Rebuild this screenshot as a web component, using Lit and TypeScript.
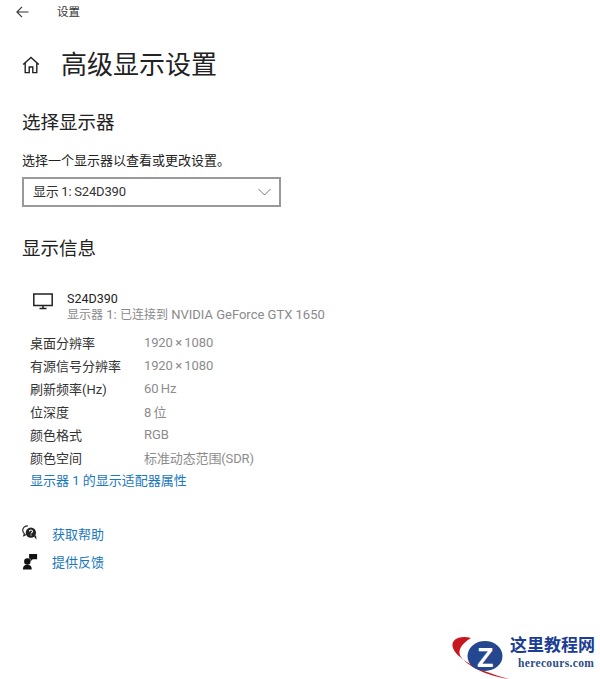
import { LitElement, html, css } from "lit";
import { customElement } from "lit/decorators.js";

const rows: [string, string][] = [
  ["桌面分辨率", "1920 × 1080"],
  ["有源信号分辨率", "1920 × 1080"],
  ["刷新频率(Hz)", "60 Hz"],
  ["位深度", "8 位"],
  ["颜色格式", "RGB"],
  ["颜色空间", "标准动态范围(SDR)"],
];

@customElement("app-root")
export class AppRoot extends LitElement {
  static styles = css`
    :host {
      display: block;
      width: 600px;
      height: 679px;
      overflow: hidden;
      background: #fff;
      color: #1c1c1c;
      font-family: Roboto, "Noto Sans CJK SC", sans-serif;
    }
    .page { display: flex; flex-direction: column; height: 679px; }
    .top { display: flex; align-items: center; height: 24px; padding-left: 16px; }
    .top svg { display: block; }
    .top span { margin-left: 28px; font-size: 11.5px; line-height: 24px; color: #333; }
    .title { display: flex; align-items: center; height: 40px; margin-top: 21px; padding-left: 22px; gap: 21px; }
    .title svg { display: block; }
    .title h1 { margin: 0; font-weight: 400; font-size: 26px; line-height: 40px; color: #222; }
    h2 { margin: 0; font-weight: 400; font-size: 18.5px; line-height: 28px; color: #222; padding-left: 22px; }
    .h-a { margin-top: 24px; }
    .h-b { margin-top: 28px; }
    .hint { margin: 14px 0 0 22px; font-size: 13px; line-height: 20px; color: #222; }
    .select {
      display: flex; align-items: center; justify-content: space-between;
      box-sizing: border-box; width: 259px; height: 30px; margin: 6px 0 0 22px;
      padding: 0 8px 0 9px; border: 2px solid #999; font-size: 13px; line-height: 20px; color: #333;
      letter-spacing: -0.15px; word-spacing: -0.4px;
    }
    .device { display: flex; margin: 28px 0 0 32px; gap: 13px; }
    .device svg { display: block; margin-top: 2px; }
    .name { font-size: 12.5px; line-height: 16px; color: #222; }
    .sub { font-size: 13px; line-height: 16px; color: #8a8a8a; }
    .sub .cjk { font-size: 12px; }
    .rows { display: grid; grid-template-columns: 114px auto; justify-content: start; margin: 8px 0 0 30px; grid-auto-rows: 23px; align-items: center; font-size: 13px; }
    .rows .k { color: #333; }
    .rows .v { color: #8c8c8c; letter-spacing: -0.12px; word-spacing: -0.7px; }
    .link { color: #1a78bd; font-size: 13px; }
    .adapter { margin-left: 30px; line-height: 23px; }
    .help { display: flex; align-items: center; gap: 14px; height: 28px; padding-left: 22px; }
    .help svg { display: block; }
    .help-first { margin-top: 27px; }
    .logo { display: flex; justify-content: flex-end; margin-top: auto; padding-right: 4px; }
    .logo svg { display: block; }
    .brand { font-family: "Noto Sans CJK SC", serif; font-weight: 700; font-size: 17px; fill: #1b3d94; }
    .domain { font-family: "Liberation Serif", serif; font-weight: 700; font-size: 11.5px; fill: #2b4b86; letter-spacing: 0.35px; }
    .z { font-family: "Liberation Sans", sans-serif; font-weight: 700; font-size: 27px; fill: #fff; }
  `;

  render() {
    return html`<div class="page">
      <div class="top">
        <svg width="13" height="12" viewBox="0 0 13 12" fill="none" stroke="#333" stroke-width="1.1">
          <path d="M12.5 6H1M6 .8 .9 6l5.1 5.2" />
        </svg>
        <span>设置</span>
      </div>
      <div class="title">
        <svg width="18" height="18" viewBox="0 0 18 18" fill="none" stroke="#222" stroke-width="1.4">
          <path d="M1.2 8.6 9 1.4l7.8 7.2M3.2 7v9.6h4V11h3.600v5.600h4V7" />
        </svg>
        <h1>高级显示设置</h1>
      </div>
      <h2 class="h-a">选择显示器</h2>
      <div class="hint">选择一个显示器以查看或更改设置。</div>
      <div class="select">
        <span>显示 1: S24D390</span>
        <svg width="13" height="8" viewBox="0 0 13 8" fill="none" stroke="#777" stroke-width="1">
          <path d="M.5 1 6.500 7l6-6" />
        </svg>
      </div>
      <h2 class="h-b">显示信息</h2>
      <div class="device">
        <svg width="22" height="17" viewBox="0 0 22 17" fill="none" stroke="#222" stroke-width="1.500">
          <path d="M1.800 1h18.400v11.500H1.800zM7.500 15.500h7M11 12.500v3" />
        </svg>
        <div>
          <div class="name">S24D390</div>
          <div class="sub"><span class="cjk">显示器</span> 1: <span class="cjk">已连接到</span> NVIDIA GeForce GTX 1650</div>
        </div>
      </div>
      <div class="rows">
        ${rows.map(([k, v]) => html`<div class="k">${k}</div><div class="v">${v}</div>`)}
      </div>
      <div class="link adapter">显示器 1 的显示适配器属性</div>
      <div class="help help-first">
        <svg width="16" height="16" viewBox="0 0 18 18">
          <path d="M6.500 1C3.200 1 .8 3.200.8 6c0 1.500.7 2.800 1.800 3.700L2 12l2.800-1.400" fill="none" stroke="#222" stroke-width="1.300" />
          <circle cx="10" cy="8.600" r="5.800" fill="#222" />
          <path d="M13.500 13l2.800 3.500-.5-5z" fill="#222" />
          <path d="M8.300 7.300c0-2.200 3.500-2.200 3.500-.1 0 1.300-1.700 1.300-1.700 2.500M10.100 10.700v1.100" fill="none" stroke="#fff" stroke-width="1.200" />
        </svg>
        <span class="link">获取帮助</span>
      </div>
      <div class="help">
        <svg width="16" height="18" viewBox="0 0 18 20" fill="#111">
          <circle cx="6" cy="10.500" r="3.600" />
          <path d="M1 19.500c0-3.600 2-5.200 5-5.200s5 1.600 5 5.200z" />
          <path d="M8 2h9v6h-5l-2.500 2.500v-3H8z" />
        </svg>
        <span class="link">提供反馈</span>
      </div>
      <div class="logo">
        <svg width="151" height="53" viewBox="0 0 151 53">
          <path d="M26 12C14 9 5 14 8 22 11 31 30 44 64 53 38 49 22 39 16 31 12 25 16 18 26 12z" fill="#c8161d" />
          <ellipse cx="40" cy="30" rx="17.500" ry="15" fill="#24478f" />
          <text class="z" x="32" y="41">Z</text>
          <text class="brand" x="65" y="25">这里教程网</text>
          <text class="domain" x="73" y="41">herecours.com</text>
        </svg>
      </div>
    </div>`;
  }
}
